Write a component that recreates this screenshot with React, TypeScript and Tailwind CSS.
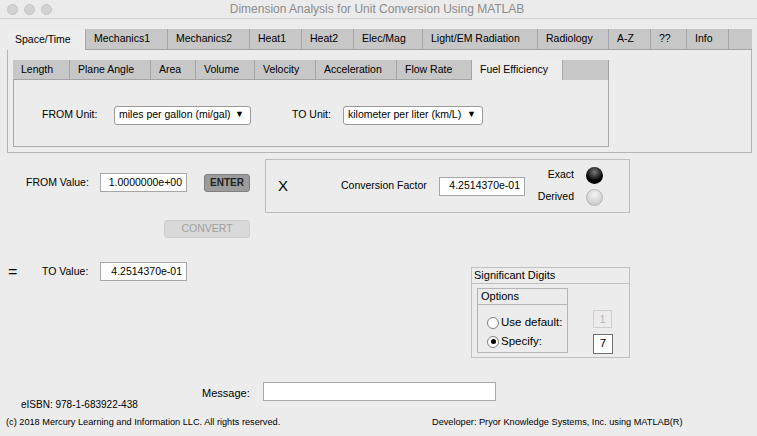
const outerTabs = [
  { label: 'Space/Time', w: 79 },
  { label: 'Mechanics1', w: 82 },
  { label: 'Mechanics2', w: 82 },
  { label: 'Heat1', w: 52 },
  { label: 'Heat2', w: 52 },
  { label: 'Elec/Mag', w: 69 },
  { label: 'Light/EM Radiation', w: 115 },
  { label: 'Radiology', w: 71 },
  { label: 'A-Z', w: 42 },
  { label: '??', w: 36 },
  { label: 'Info', w: 42 },
];

const innerTabs = [
  { label: 'Length', w: 57 },
  { label: 'Plane Angle', w: 81 },
  { label: 'Area', w: 45 },
  { label: 'Volume', w: 59 },
  { label: 'Velocity', w: 61 },
  { label: 'Acceleration', w: 81 },
  { label: 'Flow Rate', w: 75 },
  { label: 'Fuel Efficiency', w: 91 },
];

const Tab = ({ label, w, active }: { label: string; w: number; active: boolean }) => (
  <div
    style={{ width: w }}
    className={
      active
        ? 'h-full flex items-center pl-[8px] bg-[#ededed] border-r border-[#a9a9a9] whitespace-nowrap'
        : 'h-full flex items-center pl-[8px] bg-[#c7c7c7] border-r border-b border-[#a3a3a3] whitespace-nowrap'
    }
  >
    {label}
  </div>
);

const Dropdown = ({ text, w }: { text: string; w: number }) => (
  <div
    style={{ width: w }}
    className="h-[19px] flex items-center justify-between pl-[4px] pr-[6px] bg-white border border-[#9a9a9a] rounded-[3px] whitespace-nowrap"
  >
    <span>{text}</span>
    <span className="text-[9px]">▼</span>
  </div>
);

const Field = ({ value, w }: { value: string; w: number }) => (
  <div
    style={{ width: w }}
    className="h-[19px] flex items-center justify-end pr-[4px] bg-white border border-[#a6a6a6]"
  >
    {value}
  </div>
);

const Radio = ({ on, label }: { on: boolean; label: string }) => (
  <div className="flex items-center gap-[2px] h-[15px]">
    <div className="w-[12px] h-[12px] rounded-full bg-white border border-[#808080] flex items-center justify-center">
      {on && <div className="w-[5px] h-[5px] rounded-full bg-black" />}
    </div>
    <span className="text-[11.5px]">{label}</span>
  </div>
);

export default function App() {
  return (
    <div className="w-[757px] h-[436px] bg-[#ececec] text-[10.5px] text-black overflow-hidden font-['Liberation_Sans',Arial,sans-serif]">
      {/* title bar */}
      <div className="h-[19px] flex items-center border-b border-[#d0d0d0] bg-[#ebebeb]">
        <div className="flex gap-[6px] pl-[7px]">
          <div className="w-[11px] h-[11px] rounded-full bg-[#d2d2d2] border border-[#c4c4c4]" />
          <div className="w-[11px] h-[11px] rounded-full bg-[#d2d2d2] border border-[#c4c4c4]" />
          <div className="w-[11px] h-[11px] rounded-full bg-[#d2d2d2] border border-[#c4c4c4]" />
        </div>
        <div className="flex-1 text-center text-[12px] text-[#8c8c8c] pr-[55px]">
          Dimension Analysis for Unit Conversion Using MATLAB
        </div>
      </div>

      {/* outer tabs */}
      <div className="mx-[7px] mt-[10px] w-[745px]">
        <div className="flex h-[21px]">
          {outerTabs.map((t, i) => (
            <Tab key={i} label={t.label} w={t.w} active={i === 0} />
          ))}
          <div className="flex-1 bg-[#c7c7c7] border-b border-[#a3a3a3]" />
        </div>
        <div className="h-[103px] border-l border-r border-b border-[#b4b4b4] pt-[10px] pl-[5px]">
          <div className="flex h-[20px] w-[596px]">
            {innerTabs.map((t, i) => (
              <Tab key={i} label={t.label} w={t.w} active={i === 7} />
            ))}
            <div className="flex-1 bg-[#c7c7c7] border-r border-[#a3a3a3]" />
          </div>
          <div className="w-[596px] h-[67px] border-l border-r border-b border-[#a9a9a9] flex items-center pt-[4px] pl-[28px]">
            <span className="w-[72px]">FROM Unit:</span>
            <Dropdown text="miles per gallon (mi/gal)" w={137} />
            <span className="ml-[41px] w-[51px]">TO Unit:</span>
            <Dropdown text="kilometer per liter (km/L)" w={140} />
          </div>
        </div>
      </div>

      {/* conversion area */}
      <div className="flex mt-[6px]">
        <div className="w-[265px]">
          <div className="flex items-center mt-[14px] h-[19px]">
            <span className="ml-[26px] w-[74px]">FROM Value:</span>
            <Field value="1.0000000e+00" w={87} />
            <div className="ml-[17px] w-[46px] h-[18px] rounded-[3px] bg-[#9c9c9c] border border-[#7f7f7f] flex items-center justify-center font-bold text-[10px] text-[#222]">
              ENTER
            </div>
          </div>
          <div className="ml-[164px] mt-[28px] w-[86px] h-[18px] rounded-[3px] bg-[#d9d9d9] border border-[#cdcdcd] flex items-center justify-center text-[#a0a0a0]">
            CONVERT
          </div>
        </div>
        <div className="w-[365px] h-[54px] border border-[#bdbdbd] flex items-center">
          <span className="ml-[12px] text-[15px]">X</span>
          <span className="ml-[53px] w-[98px]">Conversion Factor</span>
          <Field value="4.2514370e-01" w={86} />
          <div className="ml-[11px] flex flex-col gap-[5px] w-[67px]">
            <div className="flex items-center justify-end gap-[12px]">
              <span>Exact</span>
              <div className="w-[17px] h-[17px] rounded-full bg-[radial-gradient(circle_at_50%_30%,#7a7a7a,#000_60%)]" />
            </div>
            <div className="flex items-center justify-end gap-[12px]">
              <span>Derived</span>
              <div className="w-[17px] h-[17px] rounded-full border border-[#b5b5b5] bg-[radial-gradient(circle_at_50%_30%,#f4f4f4,#d0d0d0_70%)]" />
            </div>
          </div>
        </div>
      </div>

      {/* to value + significant digits */}
      <div className="flex items-start mt-[24px]">
        <div className="flex items-center h-[19px]">
          <span className="ml-[8px] w-[34px] text-[16px]">=</span>
          <span className="w-[58px]">TO Value:</span>
          <Field value="4.2514370e-01" w={87} />
        </div>
        <div className="ml-[284px] mt-[5px] w-[159px] h-[91px] border border-[#c0c0c0]">
          <div className="h-[16px] border-b border-[#c0c0c0] pl-[2px] flex items-center text-[11px]">
            Significant Digits
          </div>
          <div className="flex">
            <div className="ml-[5px] mt-[4px] w-[91px] h-[65px] border border-[#b5b5b5]">
              <div className="h-[16px] border-b border-[#b5b5b5] pl-[3px] flex items-center text-[11px]">
                Options
              </div>
              <div className="pl-[9px] pt-[10px] flex flex-col gap-[4px]">
                <Radio on={false} label="Use default:" />
                <Radio on={true} label="Specify:" />
              </div>
            </div>
            <div className="ml-[25px] mt-[26px] flex flex-col gap-[6px]">
              <div className="w-[19px] h-[18px] border border-[#cfcfcf] flex items-center justify-center text-[#b0b0b0] text-[10px]">
                1
              </div>
              <div className="w-[20px] h-[20px] bg-white border border-[#6f6f6f] flex items-center justify-center text-[11.5px]">
                7
              </div>
            </div>
          </div>
        </div>
      </div>

      {/* message */}
      <div className="flex items-start mt-[24px] h-[27px]">
        <span className="ml-[21px] mt-[15px] w-[181px] text-[10px]">eISBN: 978-1-683922-438</span>
        <span className="mt-[3px] w-[61px] text-[11px]">Message:</span>
        <div className="w-[233px] h-[19px] bg-white border border-[#a8a8a8]" />
      </div>

      {/* footer */}
      <div className="flex items-center mt-[7px] text-[9.2px]">
        <span className="ml-[6px] w-[426px]">(c) 2018 Mercury Learning and Information LLC. All rights reserved.</span>
        <span>Developer: Pryor Knowledge Systems, Inc. using MATLAB(R)</span>
      </div>
    </div>
  );
}
